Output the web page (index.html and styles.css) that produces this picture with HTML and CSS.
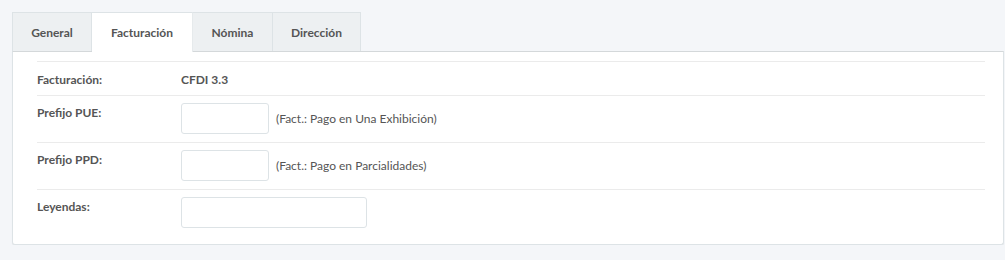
FILE: index.html
```html
<!DOCTYPE html>
<html lang="es">
<head>
    <meta charset="UTF-8">
    <title>Configuración</title>
    <link rel="stylesheet" href="styles.css">
</head>
<body>
    <div class="tabs">
        <div class="tab">General</div>
        <div class="tab active">Facturación</div>
        <div class="tab">Nómina</div>
        <div class="tab">Dirección</div>
    </div>
    <div class="panel">
        <div class="row short">
            <div class="label">Facturación:</div>
            <div class="value">CFDI 3.3</div>
        </div>
        <div class="row">
            <div class="label">Prefijo PUE:</div>
            <input type="text" class="small">
            <span class="help">(Fact.: Pago en Una Exhibición)</span>
        </div>
        <div class="row">
            <div class="label">Prefijo PPD:</div>
            <input type="text" class="small">
            <span class="help">(Fact.: Pago en Parcialidades)</span>
        </div>
        <div class="row last">
            <div class="label">Leyendas:</div>
            <input type="text" class="wide">
        </div>
    </div>
</body>
</html>
```

FILE: styles.css
```css
body {
    margin: 0;
    padding: 12px 1px 0 12px;
    background-color: #f4f6f9;
    font-family: Lato, "Open Sans", sans-serif;
    font-size: 12px;
    color: #555;
}
.tabs {
    display: flex;
    height: 39px;
}
.tab {
    box-sizing: border-box;
    height: 39px;
    line-height: 40px;
    text-align: center;
    background: #edf0f2;
    border: 1px solid #dde3e6;
    border-bottom: none;
    border-left: none;
    font-weight: bold;
    color: #555;
}
.tab:first-child {
    border-left: 1px solid #dde3e6;
    width: 80px;
}
.tab:nth-child(2) { width: 101px; }
.tab:nth-child(3) { width: 80px; }
.tab:nth-child(4) { width: 88px; }
.tab.active {
    background: #fff;
    height: 40px;
    position: relative;
    z-index: 1;
    border-right-color: #e6eaec;
}
.panel {
    background: #fff;
    border: 1px solid #dde3e6;
    border-top-color: #d4d8da;
    border-radius: 0 0 3px 3px;
    box-shadow: 0 1px 1px rgba(0,0,0,0.05);
    padding: 9px 18px 16px 24px;
}
.row {
    display: flex;
    align-items: flex-start;
    border-top: 1px solid #ebebeb;
    padding: 7px 0 8px 0;
    height: 31px;
}
.row.short {
    height: 18px;
    padding: 8px 0 7px;
    align-items: center;
}
.row.last {
    padding-bottom: 0;
}
.label {
    width: 144px;
    font-weight: bold;
    padding-top: 2px;
}
.short .label { padding-top: 0; }
.value {
    font-weight: bold;
}
input {
    box-sizing: border-box;
    height: 31px;
    border: 1px solid #dde3e6;
    border-radius: 3px;
    background: #fff;
    margin: 0;
    padding: 4px 8px;
}
input.small { width: 88px; }
input.wide { width: 186px; }
.help {
    margin-left: 7px;
    line-height: 31px;
}
```
